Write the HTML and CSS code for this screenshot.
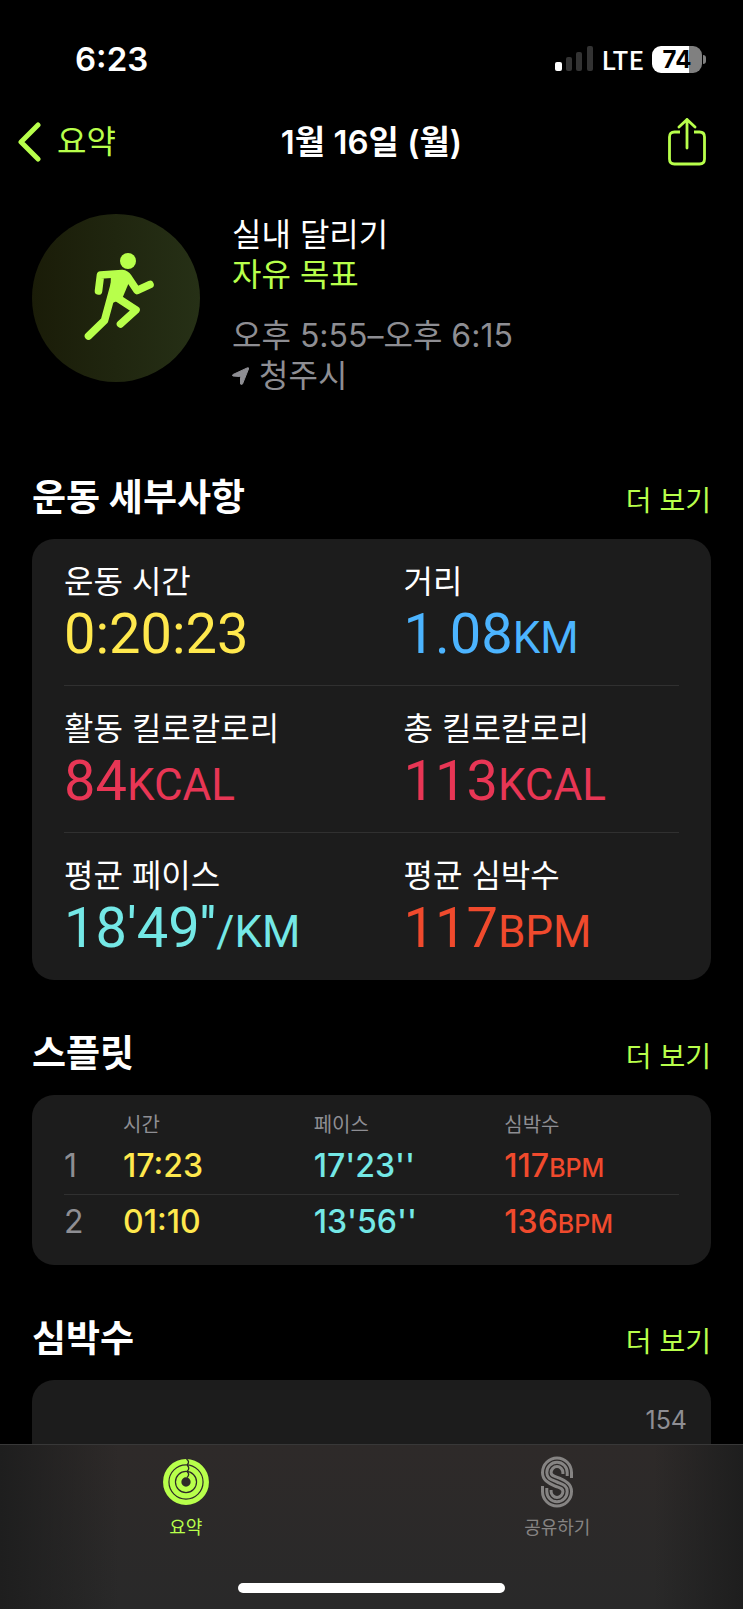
FILE: index.html
```html
<!DOCTYPE html>
<html lang="ko">
<head>
    <meta charset="UTF-8">
    <meta name="viewport" content="width=device-width, initial-scale=1.0">
    <title>1월 16일 (월)</title>
    <link rel="stylesheet" href="styles.css">
</head>
<body>
<div class="status-bar">
    <span class="clock">6:23</span>
    <div class="status-icons">
        <svg class="signal" width="39" height="26" viewBox="0 0 39 26" aria-hidden="true">
            <rect x="0" y="16" width="7" height="9" rx="2" fill="#fff"/>
            <rect x="11" y="11" width="6" height="14" rx="2" fill="#333"/>
            <rect x="21" y="6" width="6" height="19" rx="2" fill="#333"/>
            <rect x="32" y="0" width="6" height="25" rx="2" fill="#333"/>
        </svg>
        <span class="network">LTE</span>
        <span class="battery">74</span>
        <span class="battery-cap"></span>
    </div>
</div>

<header class="nav-bar">
    <a href="#" class="back-link">
        <svg width="24" height="40" viewBox="0 0 24 40" aria-hidden="true">
            <path d="M21 3L4 20L21 37" fill="none" stroke="currentColor" stroke-width="5" stroke-linecap="round" stroke-linejoin="round"/>
        </svg>
        <span>요약</span>
    </a>
    <h1>1월 16일 (월)</h1>
    <button type="button" class="share-button" aria-label="공유">
        <svg width="38" height="48" viewBox="0 0 38 48" aria-hidden="true">
            <g fill="none" stroke="currentColor" stroke-width="2.800" stroke-linecap="round" stroke-linejoin="round">
                <path d="M12 14H6.500Q1.500 14 1.500 19V41Q1.500 46 6.500 46H31.500Q36.500 46 36.500 41V19Q36.500 14 31.500 14H26" stroke-linecap="butt"/>
                <path d="M19 30V1.500M11 9L19 1.500L27 9"/>
            </g>
        </svg>
    </button>
</header>

<main>
    <section class="summary">
        <div class="workout-icon">
            <svg viewBox="0 0 168 168" aria-hidden="true">
                <circle cx="96" cy="47" r="8" fill="currentColor"/>
                <path d="M79 59L92 57L98 66L90 85L78 90Z" fill="currentColor"/>
                <g fill="none" stroke="currentColor" stroke-width="7.600" stroke-linecap="round" stroke-linejoin="round">
                    <path d="M66.500 77L68.500 61L90 59.500Q94 60 96 63L105 76.500L118 70.500"/>
                    <path d="M56.500 122L72.500 106.500L83 68"/>
                    <path d="M84 83L104 96L88.500 110"/>
                </g>
            </svg>
        </div>
        <div class="summary-text">
            <p>실내 달리기</p>
            <p class="goal">자유 목표</p>
            <p class="time">오후 5:55–오후 6:15</p>
            <p class="place">
                <svg width="17" height="18" viewBox="0 0 17 18" aria-hidden="true">
                    <path d="M15 1Q17 0 16.500 2L10.500 17Q9.500 18.500 8.500 17V10.500Q8.500 9.500 7.500 9.500L1 9Q-.500 8.500 1 7.500Z" fill="currentColor" stroke="currentColor" stroke-width="1"/>
                </svg>
                <span>청주시</span>
            </p>
        </div>
    </section>

    <section>
        <div class="section-header">
            <h2>운동 세부사항</h2>
            <a href="#">더 보기</a>
        </div>
        <div class="card metrics">
            <div class="metric-row">
                <div class="metric">
                    <p class="label">운동 시간</p>
                    <p class="value yellow">0:20:23</p>
                </div>
                <div class="metric">
                    <p class="label">거리</p>
                    <p class="value blue">1.08<span class="unit">KM</span></p>
                </div>
            </div>
            <div class="metric-row">
                <div class="metric">
                    <p class="label">활동 킬로칼로리</p>
                    <p class="value pink">84<span class="unit">KCAL</span></p>
                </div>
                <div class="metric">
                    <p class="label">총 킬로칼로리</p>
                    <p class="value pink">113<span class="unit">KCAL</span></p>
                </div>
            </div>
            <div class="metric-row">
                <div class="metric">
                    <p class="label">평균 페이스</p>
                    <p class="value cyan">18'49''<span class="unit">/KM</span></p>
                </div>
                <div class="metric">
                    <p class="label">평균 심박수</p>
                    <p class="value red">117<span class="unit">BPM</span></p>
                </div>
            </div>
        </div>
    </section>

    <section>
        <div class="section-header">
            <h2>스플릿</h2>
            <a href="#">더 보기</a>
        </div>
        <div class="card splits">
            <table>
                <thead>
                    <tr>
                        <td class="index"></td>
                        <th scope="col" class="wide">시간</th>
                        <th scope="col" class="wide">페이스</th>
                        <th scope="col">심박수</th>
                    </tr>
                </thead>
                <tbody>
                    <tr>
                        <td class="index">1</td>
                        <td class="yellow">17:23</td>
                        <td class="cyan">17'23''</td>
                        <td class="red">117<span class="unit">BPM</span></td>
                    </tr>
                    <tr>
                        <td class="index">2</td>
                        <td class="yellow">01:10</td>
                        <td class="cyan">13'56''</td>
                        <td class="red">136<span class="unit">BPM</span></td>
                    </tr>
                </tbody>
            </table>
        </div>
    </section>

    <section>
        <div class="section-header">
            <h2>심박수</h2>
            <a href="#">더 보기</a>
        </div>
        <div class="card heart-rate">
            <span>154</span>
        </div>
    </section>
</main>

<nav class="tab-bar">
    <div class="tabs">
        <a href="#" class="tab active">
            <svg width="46" height="52" viewBox="0 0 46 52" aria-hidden="true">
                <g fill="none" stroke="currentColor" stroke-width="5.300">
                    <circle cx="23" cy="26" r="20.300"/>
                    <circle cx="23" cy="26" r="13.800"/>
                    <circle cx="23" cy="26" r="7.300"/>
                </g>
                <path d="M23.500 3Q27 5.700 24.500 8.500V9.500Q27 12.200 24.500 15V16Q27 18.700 24 21.500" fill="none" stroke="#2b2827" stroke-width="1.300"/>
            </svg>
            <span>요약</span>
        </a>
        <a href="#" class="tab">
            <svg width="34" height="52" viewBox="0 0 34 52" aria-hidden="true">
                <g fill="none" stroke="currentColor" stroke-width="3">
                    <path d="M31.500 22V16.500A14.500 14.500 0 0 0 2.500 16.500C2.500 24 8 27 14.500 29.800C19.500 32 22.900 32 22.900 35.500A5.900 5.900 0 0 1 11.100 35.500V34"/>
                    <path d="M27.200 20V16.500A10.200 10.200 0 0 0 6.800 16.500C6.800 22.500 11 23.400 17 26C23 28.600 27.200 29.500 27.200 35.500A10.200 10.200 0 0 1 6.800 35.500V32"/>
                    <path d="M22.900 18V16.500A5.900 5.900 0 0 0 11.100 16.500C11.100 20 14.500 20 19.500 22.200C26 25 31.500 28 31.500 35.500A14.500 14.500 0 0 1 2.500 35.500V30"/>
                </g>
            </svg>
            <span>공유하기</span>
        </a>
    </div>
    <div class="home-indicator"></div>
</nav>
</body>
</html>
```
FILE: styles.css
```css
* { box-sizing: border-box; }
body { margin: 0; height: 100vh; display: flex; flex-direction: column; background-color: #000; color: #fff; font-family: Inter, "Noto Sans CJK KR", sans-serif; font-size: 32px; line-height: 40px; }
h1, h2, p { margin: 0; }
a { color: inherit; text-decoration: none; }
svg { display: block; flex: none; }

/* Status bar */
.status-bar { flex: none; display: flex; justify-content: space-between; align-items: center; height: 118px; padding: 0 37px 0 75px; }
.clock { font-size: 33px; font-weight: 600; }
.status-icons { display: flex; align-items: center; }
.network { margin: 0 8px; font-family: "Noto Sans CJK KR", sans-serif; font-size: 26px; font-weight: 500; }
.battery { width: 50px; height: 27px; border-radius: 9px; background: linear-gradient(to right, #fff 74%, #808080 74%); color: #000; font-size: 24px; font-weight: 700; line-height: 27px; text-align: center; }
.battery-cap { width: 3px; height: 9px; margin-left: 1px; border-radius: 0 3px 3px 0; background-color: #808080; }

/* Navigation bar */
.nav-bar { flex: none; display: grid; grid-template-columns: 1fr auto 1fr; align-items: center; height: 48px; padding: 0 37px 0 17px; }
.nav-bar h1 { font-size: 33px; font-weight: 600; padding-left: 20px; }
.back-link { display: flex; align-items: center; gap: 16px; color: #b8ff4b; }
.share-button { justify-self: end; padding: 0; border: none; background: none; color: #b8ff4b; cursor: pointer; }

/* Scrolling content */
main { flex: 1; min-height: 0; overflow: auto; scrollbar-width: none; padding: 0 32px; }
.summary { display: flex; gap: 32px; padding: 48px 0 28px; }
.workout-icon { flex: none; width: 168px; height: 168px; border-radius: 50%; background: linear-gradient(to right, #1a1c08, #263016); color: #b8ff4b; }
.summary-text { padding-top: 1px; }
.goal { color: #b8ff4b; }
.time, .place { color: #8e8e93; }
.time { margin-top: 21px; }
.place { display: flex; align-items: center; gap: 10px; }

.section-header { display: flex; justify-content: space-between; align-items: center; padding: 46px 0 13px; }
.section-header h2 { font-size: 37px; font-weight: 700; line-height: 56px; }
.section-header a { padding-top: 6px; font-size: 28px; color: #b8ff4b; }
.card { border-radius: 22px; background-color: #1c1c1c; }

/* Workout details */
.metrics { padding-bottom: 1px; }
.metric-row { display: grid; grid-template-columns: 1fr 1fr; column-gap: 64px; margin: 0 32px; padding: 23px 0 19px; border-bottom: 1px solid #303030; }
.metric-row:last-child { border-bottom: none; }
.value { font-family: Roboto, sans-serif; font-size: 56px; line-height: 64px; white-space: nowrap; }
.unit { line-height: 1; }
.value .unit { font-size: 44px; }
.yellow { color: #ffe84d; }
.blue { color: #4cb4ff; }
.pink { color: #e83655; }
.cyan { color: #74e8e6; }
.red { color: #f04a2d; }

/* Splits */
.splits { padding: 17px 32px 15px; }
.splits table { width: 100%; table-layout: fixed; border-collapse: collapse; }
.splits th, .splits td { padding: 0; text-align: left; }
.splits th { height: 26px; color: #8e8e93; font-size: 20px; font-weight: 400; line-height: 26px; }
.splits .wide { width: 31%; }
.splits tbody td { height: 56px; font-size: 32px; font-weight: 500; }
.splits tbody tr + tr { border-top: 1px solid #303030; }
.splits tbody .index { color: #8e8e93; font-weight: 400; }
.splits .index { width: 59px; }
.splits .unit { font-size: 25px; }

.heart-rate { height: 400px; padding: 20px 24px; color: #8e8e93; font-size: 25px; text-align: right; }

/* Tab bar */
.tab-bar { flex: none; display: flex; flex-direction: column; justify-content: space-between; height: 165px; padding: 11px 0 16px; border-top: 1px solid #383838; background: linear-gradient(to right, #1e1e1e, rgba(30, 30, 30, 0) 16%, rgba(30, 30, 30, 0) 88%, #1e1e1e), linear-gradient(#2e2a29, #292929); }
.tabs { display: grid; grid-template-columns: 1fr 1fr; }
.tab { display: flex; flex-direction: column; align-items: center; color: #868483; font-size: 18px; }
.tab.active { color: #b8ff4b; }
.home-indicator { align-self: center; width: 36%; height: 10px; border-radius: 5px; background-color: #fff; }
```
